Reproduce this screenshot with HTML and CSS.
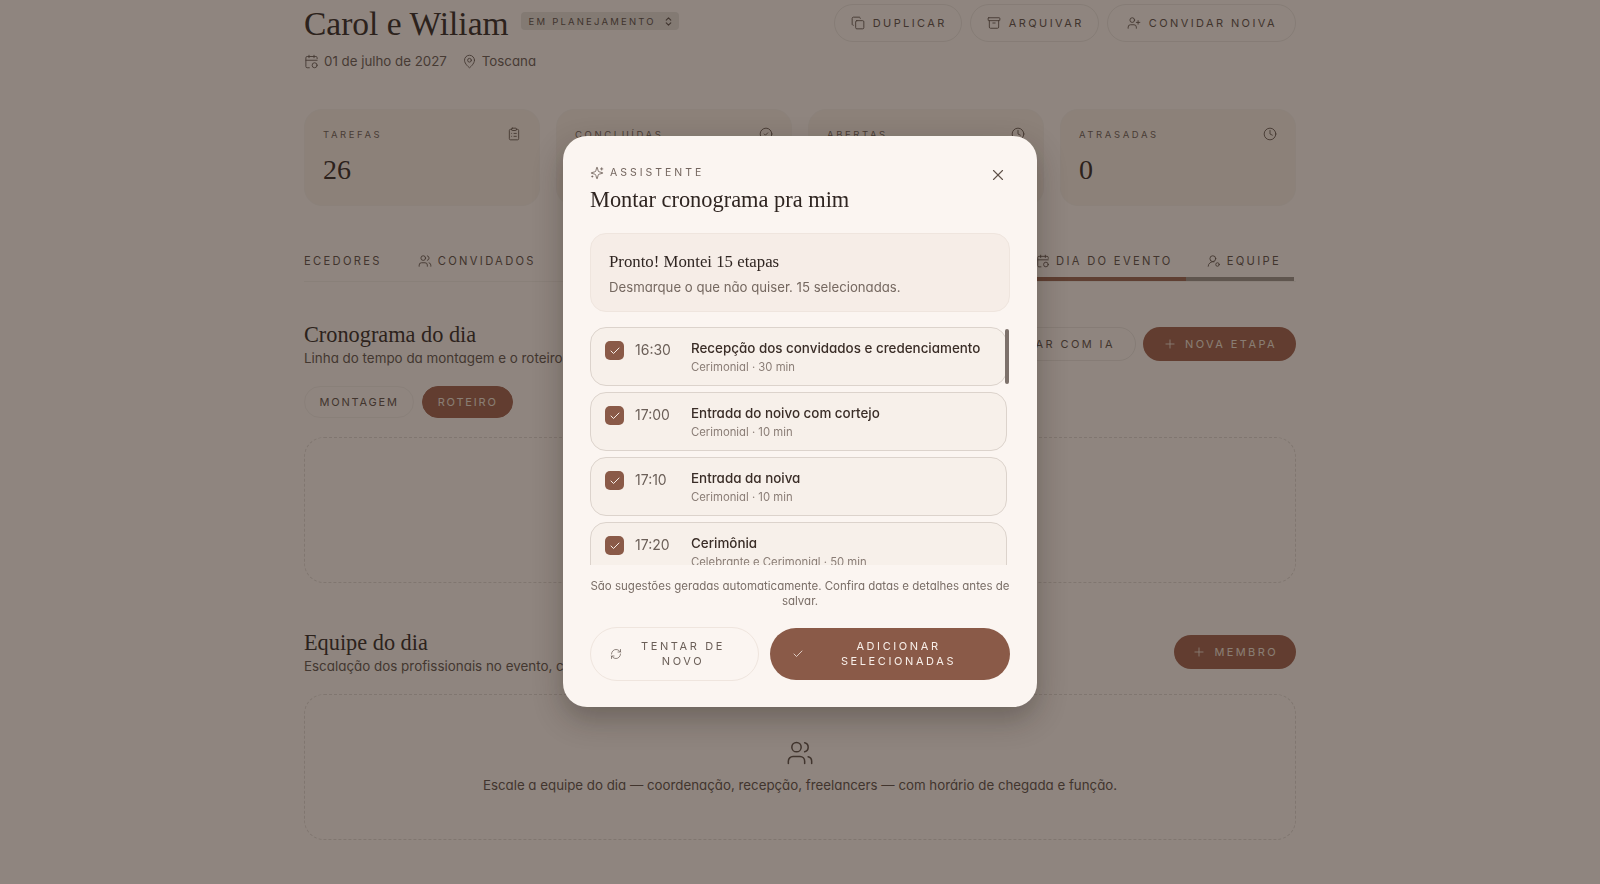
FILE: index.html
```html
<!DOCTYPE html>
<html lang="pt-BR">
<head>
    <meta charset="UTF-8">
    <meta name="viewport" content="width=device-width, initial-scale=1.0">
    <title>Carol e Wiliam</title>
    <link rel="stylesheet" href="styles.css">
</head>
<body>
    <svg class="sprite" xmlns="http://www.w3.org/2000/svg">
        <symbol id="i-calendar" viewBox="0 0 24 24"><path d="M21 7.5V6a2 2 0 0 0-2-2H5a2 2 0 0 0-2 2v14a2 2 0 0 0 2 2h3.5"/><path d="M16 2v4"/><path d="M8 2v4"/><path d="M3 10h18"/><circle cx="17" cy="18" r="4"/></symbol>
        <symbol id="i-pin" viewBox="0 0 24 24"><path d="M20 10c0 6-8 12-8 12s-8-6-8-12a8 8 0 0 1 16 0Z"/><circle cx="12" cy="10" r="3"/></symbol>
        <symbol id="i-copy" viewBox="0 0 24 24"><rect x="8" y="8" width="14" height="14" rx="2"/><path d="M4 16c-1.1 0-2-.9-2-2V4c0-1.1.9-2 2-2h10c1.1 0 2 .9 2 2"/></symbol>
        <symbol id="i-archive" viewBox="0 0 24 24"><rect x="2" y="3" width="20" height="5" rx="1"/><path d="M4 8v11a2 2 0 0 0 2 2h12a2 2 0 0 0 2-2V8"/><path d="M10 12h4"/></symbol>
        <symbol id="i-user-plus" viewBox="0 0 24 24"><path d="M16 21v-2a4 4 0 0 0-4-4H6a4 4 0 0 0-4 4v2"/><circle cx="9" cy="7" r="4"/><path d="M19 8v6"/><path d="M22 11h-6"/></symbol>
        <symbol id="i-clipboard" viewBox="0 0 24 24"><rect x="8" y="2" width="8" height="4" rx="1"/><path d="M16 4h2a2 2 0 0 1 2 2v14a2 2 0 0 1-2 2H6a2 2 0 0 1-2-2V6a2 2 0 0 1 2-2h2"/><path d="M12 11h4"/><path d="M12 16h4"/><path d="M8 11h.01"/><path d="M8 16h.01"/></symbol>
        <symbol id="i-circle-check" viewBox="0 0 24 24"><circle cx="12" cy="12" r="10"/><path d="m9 12 2 2 4-4"/></symbol>
        <symbol id="i-clock" viewBox="0 0 24 24"><circle cx="12" cy="12" r="10"/><path d="M12 6v6l4 2"/></symbol>
        <symbol id="i-users" viewBox="0 0 24 24"><path d="M16 21v-2a4 4 0 0 0-4-4H6a4 4 0 0 0-4 4v2"/><circle cx="9" cy="7" r="4"/><path d="M22 21v-2a4 4 0 0 0-3-3.87"/><path d="M16 3.13a4 4 0 0 1 0 7.75"/></symbol>
        <symbol id="i-user-cog" viewBox="0 0 24 24"><circle cx="10" cy="8" r="5"/><path d="M2 21a8 8 0 0 1 10-7.7"/><circle cx="18" cy="18" r="3"/></symbol>
        <symbol id="i-plus" viewBox="0 0 24 24"><path d="M5 12h14"/><path d="M12 5v14"/></symbol>
        <symbol id="i-check" viewBox="0 0 24 24"><path d="M20 6 9 17l-5-5"/></symbol>
        <symbol id="i-refresh" viewBox="0 0 24 24"><path d="M3 12a9 9 0 0 1 9-9 9.75 9.75 0 0 1 6.74 2.74L21 8"/><path d="M21 3v5h-5"/><path d="M21 12a9 9 0 0 1-9 9 9.75 9.75 0 0 1-6.74-2.74L3 16"/><path d="M8 16H3v5"/></symbol>
        <symbol id="i-x" viewBox="0 0 24 24"><path d="M18 6 6 18"/><path d="m6 6 12 12"/></symbol>
        <symbol id="i-sparkles" viewBox="0 0 24 24"><path d="M9.937 15.5A2 2 0 0 0 8.5 14.063l-6.135-1.582a.5.5 0 0 1 0-.962L8.5 9.936A2 2 0 0 0 9.937 8.5l1.582-6.135a.5.5 0 0 1 .963 0L14.063 8.5A2 2 0 0 0 15.5 9.937l6.135 1.581a.5.5 0 0 1 0 .964L15.5 14.063a2 2 0 0 0-1.437 1.437l-1.582 6.135a.5.5 0 0 1-.963 0z"/><path d="M20 3v4"/><path d="M22 5h-4"/><path d="M4 17v2"/><path d="M5 18H3"/></symbol>
        <symbol id="i-updown" viewBox="0 0 24 24"><path d="m7 15 5 5 5-5"/><path d="m7 9 5-5 5 5"/></symbol>
    </svg>

    <div class="page">
        <header class="head">
            <div>
                <div class="head-title">
                    <h1 class="couple">Carol e Wiliam</h1>
                    <span class="status">EM PLANEJAMENTO <svg class="icon icon-xs"><use href="#i-updown"/></svg></span>
                </div>
                <div class="meta">
                    <span class="meta-item"><svg class="icon"><use href="#i-calendar"/></svg>01 de julho de 2027</span>
                    <span class="meta-item"><svg class="icon"><use href="#i-pin"/></svg>Toscana</span>
                </div>
            </div>
            <div class="head-actions">
                <span class="btn btn-head"><svg class="icon"><use href="#i-copy"/></svg>DUPLICAR</span>
                <span class="btn btn-head"><svg class="icon"><use href="#i-archive"/></svg>ARQUIVAR</span>
                <span class="btn btn-head btn-invite"><svg class="icon"><use href="#i-user-plus"/></svg>CONVIDAR NOIVA</span>
            </div>
        </header>

        <section class="stats">
            <div class="stat">
                <div class="stat-top"><span class="stat-label">TAREFAS</span><svg class="icon"><use href="#i-clipboard"/></svg></div>
                <div class="stat-value">26</div>
            </div>
            <div class="stat">
                <div class="stat-top"><span class="stat-label">CONCLUÍDAS</span><svg class="icon"><use href="#i-circle-check"/></svg></div>
                <div class="stat-value">0</div>
            </div>
            <div class="stat">
                <div class="stat-top"><span class="stat-label">ABERTAS</span><svg class="icon"><use href="#i-clock"/></svg></div>
                <div class="stat-value">26</div>
            </div>
            <div class="stat">
                <div class="stat-top"><span class="stat-label">ATRASADAS</span><svg class="icon"><use href="#i-clock"/></svg></div>
                <div class="stat-value">0</div>
            </div>
        </section>

        <nav class="tabs">
            <div class="tabs-group tabs-left">
                <span class="tab tab-cut">FORNECEDORES</span>
                <span class="tab"><svg class="icon"><use href="#i-users"/></svg>CONVIDADOS</span>
            </div>
            <div class="tabs-group tabs-right">
                <span class="tab tab-active"><svg class="icon"><use href="#i-calendar"/></svg>DIA DO EVENTO</span>
                <span class="tab tab-last"><svg class="icon"><use href="#i-user-cog"/></svg>EQUIPE</span>
            </div>
            <div class="tabs-thumb"></div>
        </nav>

        <section class="block">
            <div class="block-head">
                <div>
                    <h2 class="block-title">Cronograma do dia</h2>
                    <p class="block-sub">Linha do tempo da montagem e o roteiro da festa</p>
                </div>
                <div class="block-actions">
                    <span class="btn btn-outline">GERAR COM IA</span>
                    <span class="btn btn-dark"><svg class="icon"><use href="#i-plus"/></svg>NOVA ETAPA</span>
                </div>
            </div>
            <div class="pills">
                <span class="pill">MONTAGEM</span>
                <span class="pill pill-on">ROTEIRO</span>
            </div>
            <div class="empty empty-plain"></div>
        </section>

        <section class="block block-team">
            <div class="block-head">
                <div>
                    <h2 class="block-title">Equipe do dia</h2>
                    <p class="block-sub">Escalação dos profissionais no evento, com horário e função</p>
                </div>
                <span class="btn btn-dark btn-member"><svg class="icon"><use href="#i-plus"/></svg>MEMBRO</span>
            </div>
            <div class="empty">
                <svg class="icon icon-lg"><use href="#i-users"/></svg>
                <p>Escale a equipe do dia — coordenação, recepção, freelancers — com horário de chegada e função.</p>
            </div>
        </section>
    </div>

    <div class="overlay">
        <div class="modal">
            <div class="modal-head">
                <div>
                    <div class="eyebrow"><svg class="icon"><use href="#i-sparkles"/></svg>ASSISTENTE</div>
                    <h2 class="modal-title">Montar cronograma pra mim</h2>
                </div>
                <svg class="icon close"><use href="#i-x"/></svg>
            </div>

            <div class="summary">
                <div class="summary-title">Pronto! Montei 15 etapas</div>
                <div class="summary-sub">Desmarque o que não quiser. 15 selecionadas.</div>
            </div>

            <div class="steps">
                <div class="step">
                    <span class="check"><svg class="icon"><use href="#i-check"/></svg></span>
                    <span class="step-time">16:30</span>
                    <div>
                        <div class="step-name">Recepção dos convidados e credenciamento</div>
                        <div class="step-info">Cerimonial · 30 min</div>
                    </div>
                </div>
                <div class="step">
                    <span class="check"><svg class="icon"><use href="#i-check"/></svg></span>
                    <span class="step-time">17:00</span>
                    <div>
                        <div class="step-name">Entrada do noivo com cortejo</div>
                        <div class="step-info">Cerimonial · 10 min</div>
                    </div>
                </div>
                <div class="step">
                    <span class="check"><svg class="icon"><use href="#i-check"/></svg></span>
                    <span class="step-time">17:10</span>
                    <div>
                        <div class="step-name">Entrada da noiva</div>
                        <div class="step-info">Cerimonial · 10 min</div>
                    </div>
                </div>
                <div class="step">
                    <span class="check"><svg class="icon"><use href="#i-check"/></svg></span>
                    <span class="step-time">17:20</span>
                    <div>
                        <div class="step-name">Cerimônia</div>
                        <div class="step-info">Celebrante e Cerimonial · 50 min</div>
                    </div>
                </div>
                <div class="steps-thumb"></div>
            </div>

            <p class="note">São sugestões geradas automaticamente. Confira datas e detalhes antes de salvar.</p>

            <div class="modal-actions">
                <span class="btn-big btn-retry"><svg class="icon"><use href="#i-refresh"/></svg><span class="btn-big-text">TENTAR DE<br>NOVO</span></span>
                <span class="btn-big btn-add"><svg class="icon"><use href="#i-check"/></svg><span class="btn-big-text">ADICIONAR<br>SELECIONADAS</span></span>
            </div>
        </div>
    </div>
</body>
</html>
```

FILE: styles.css
```css
* {
    box-sizing: border-box;
}

body {
    margin: 0;
    height: 884px;
    overflow: hidden;
    background-color: #faf1eb;
    color: #46362e;
    font-family: Inter, "Noto Sans", sans-serif;
    font-feature-settings: "cv11";
}

h1, h2, p {
    margin: 0;
    font-weight: 400;
}

.sprite {
    display: none;
}

.icon {
    width: 14px;
    height: 14px;
    flex: none;
    fill: none;
    stroke: currentColor;
    stroke-width: 1.5;
    stroke-linecap: round;
    stroke-linejoin: round;
}

.icon-xs {
    width: 11px;
    height: 11px;
    stroke-width: 2.4;
}

.icon-lg {
    width: 28px;
    height: 28px;
    stroke-width: 1.3;
}

.page {
    width: 992px;
    margin: 0 auto;
}

/* header */
.head {
    display: flex;
    justify-content: space-between;
    align-items: flex-start;
    padding-top: 2px;
}

.head-title {
    display: flex;
    align-items: center;
    gap: 12px;
    height: 44px;
}

.couple {
    font-family: "Liberation Serif", serif;
    font-size: 33.5px;
    line-height: 44px;
    color: #352a26;
}

.status {
    display: flex;
    align-items: center;
    gap: 7px;
    height: 18px;
    margin-top: -6px;
    padding: 0 5px 0 8px;
    border-radius: 4px;
    background: #e2dad3;
    font-size: 9.5px;
    letter-spacing: 2.2px;
    color: #5c4f48;
}

.meta {
    display: flex;
    gap: 15px;
    margin-top: 7px;
    font-size: 13.3px;
    color: #6a5c55;
}

.meta-item {
    display: flex;
    align-items: center;
    gap: 5px;
}

.meta-item .icon {
    width: 15px;
    height: 15px;
}

.head-actions {
    display: flex;
    gap: 8px;
    margin-top: 2px;
}

.btn {
    display: inline-flex;
    align-items: center;
    gap: 8px;
    border-radius: 999px;
    font-size: 11px;
    letter-spacing: 2.4px;
    white-space: nowrap;
}

.btn-head {
    height: 38px;
    padding: 0 14px 0 16px;
    border: 1px solid #e8dfd8;
    color: #5f5048;
}

.btn-invite {
    padding: 0 18px 0 19px;
}

/* stats */
.stats {
    display: grid;
    grid-template-columns: repeat(4, 1fr);
    gap: 16px;
    margin-top: 40px;
}

.stat {
    height: 97px;
    padding: 17px 18px;
    border: 1px solid #f2e9e1;
    border-radius: 18px;
    background: #f5e9df;
}

.stat-top {
    display: flex;
    justify-content: space-between;
    align-items: center;
    color: #5f5048;
}

.stat-label {
    font-size: 9.5px;
    letter-spacing: 2.6px;
    color: #6e6058;
}

.stat-value {
    margin-top: 12px;
    font-family: "Liberation Serif", serif;
    font-size: 28px;
    line-height: 34px;
    color: #352a26;
}

/* tabs */
.tabs {
    position: relative;
    display: flex;
    justify-content: space-between;
    height: 36px;
    margin-top: 40px;
    overflow: hidden;
    border-bottom: 1px solid #efe6df;
}

.tabs-group {
    display: flex;
    align-items: flex-start;
}

.tabs-left {
    gap: 36px;
    margin-left: -40px;
}

.tabs-right {
    gap: 18px;
}

.tab {
    display: flex;
    align-items: center;
    gap: 6px;
    height: 30px;
    font-size: 11.2px;
    letter-spacing: 2.3px;
    color: #5f5048;
}

.tab-active {
    height: 35px;
    padding: 0 16px 1px 0;
    border-bottom: 4px solid #9a6450;
}

.tab-last {
    padding-right: 15px;
}

.tabs-thumb {
    position: absolute;
    right: 2px;
    bottom: 0;
    width: 108px;
    height: 4px;
    background: #9a9088;
}

/* blocks */
.block {
    margin-top: 39px;
}

.block-team {
    margin-top: 46px;
}

.block-head {
    display: flex;
    justify-content: space-between;
    align-items: center;
}

.block-title {
    font-family: "Liberation Serif", serif;
    font-size: 22.3px;
    line-height: 28px;
    color: #352a26;
}

.block-sub {
    font-size: 13.4px;
    line-height: 18px;
    color: #63554d;
}

.block-actions {
    display: flex;
    gap: 7px;
}

.btn-outline {
    height: 34px;
    padding: 0 20px;
    border: 1px solid #e8dfd8;
    color: #5f5048;
}

.btn-dark {
    height: 34px;
    padding: 0 19px 0 20px;
    background: #a0604c;
    color: #efe0d5;
}

.btn-member {
    padding: 0 18px;
}

.pills {
    display: flex;
    gap: 8px;
    margin-top: 19px;
}

.pill {
    display: flex;
    align-items: center;
    height: 32px;
    padding: 0 14.5px;
    border: 1px solid #efe6df;
    border-radius: 999px;
    font-size: 11px;
    letter-spacing: 1.8px;
    color: #5f5048;
}

.pill-on {
    border-color: #a0604c;
    background: #a0604c;
    color: #efe0d5;
}

.empty {
    display: flex;
    flex-direction: column;
    justify-content: center;
    align-items: center;
    gap: 10px;
    height: 146px;
    margin-top: 19px;
    padding-bottom: 2px;
    border: 1px dashed #ddd3cc;
    border-radius: 20px;
    color: #5f5048;
    font-size: 13.3px;
}

/* overlay + modal */
.overlay {
    position: fixed;
    top: 0;
    left: 0;
    width: 100%;
    height: 100%;
    background: rgba(36, 26, 20, 0.5);
    backdrop-filter: blur(0.5px);
}

.modal {
    position: absolute;
    top: 136px;
    left: 563px;
    width: 474px;
    height: 571px;
    padding: 27px;
    border-radius: 24px;
    background: #fbf5f1;
    box-shadow: 0 12px 30px rgba(30, 20, 14, 0.3);
}

.modal-head {
    display: flex;
    justify-content: space-between;
    align-items: flex-start;
}

.eyebrow {
    display: flex;
    align-items: center;
    gap: 6px;
    font-size: 10.5px;
    line-height: 20px;
    letter-spacing: 3px;
    color: #74665f;
}

.modal-title {
    margin-top: 2px;
    font-family: "Liberation Serif", serif;
    font-size: 22.4px;
    line-height: 30px;
    color: #2f2521;
}

.close {
    width: 18px;
    height: 18px;
    margin: 3px 3px 0 0;
    color: #5f5048;
}

.summary {
    height: 79px;
    margin-top: 18px;
    padding: 16px 18px;
    border: 1px solid #efe5de;
    border-radius: 16px;
    background: #f6ede7;
}

.summary-title {
    font-family: "Liberation Serif", serif;
    font-size: 16.8px;
    line-height: 24px;
    color: #2f2521;
}

.summary-sub {
    margin-top: 4px;
    font-size: 13.2px;
    line-height: 18px;
    color: #756860;
}

.steps {
    position: relative;
    display: flex;
    flex-direction: column;
    gap: 6px;
    height: 238px;
    margin-top: 15px;
    overflow: hidden;
}

.step {
    display: flex;
    flex: none;
    align-items: flex-start;
    width: 417px;
    height: 59px;
    padding: 10px 14px;
    border: 1px solid #dcd3cc;
    border-radius: 16px;
    background: #f7f0ea;
}

.check {
    display: flex;
    justify-content: center;
    align-items: center;
    width: 19px;
    height: 19px;
    margin-top: 3px;
    border-radius: 5px;
    background: #8a5a48;
    color: #f8efe9;
}

.check .icon {
    width: 12px;
    height: 12px;
    stroke-width: 2;
}

.step-time {
    width: 67px;
    padding-left: 11px;
    font-size: 14px;
    line-height: 24px;
    color: #6b5f58;
}

.step-name {
    font-size: 13.4px;
    font-weight: 500;
    line-height: 21px;
    color: #3a2d27;
    white-space: nowrap;
}

.step-info {
    font-size: 11.3px;
    line-height: 16px;
    color: #8a7d76;
    white-space: nowrap;
}

.steps-thumb {
    position: absolute;
    top: 2px;
    right: 1px;
    width: 4px;
    height: 55px;
    border-radius: 2px;
    background: #7d716b;
}

.note {
    margin-top: 14px;
    font-size: 11.5px;
    line-height: 15px;
    text-align: center;
    color: #7a6e67;
}

.modal-actions {
    display: flex;
    align-items: center;
    gap: 11px;
    margin-top: 18px;
}

.btn-big {
    display: flex;
    align-items: center;
    border-radius: 999px;
    font-size: 11px;
    line-height: 15px;
    letter-spacing: 2.6px;
    text-align: center;
}

.btn-big .icon {
    width: 12px;
    height: 12px;
}

.btn-big-text {
    flex: 1;
}

.btn-retry {
    width: 169px;
    height: 54px;
    padding: 0 14px 0 19px;
    border: 1px solid #efe5de;
    color: #6b5f58;
}

.btn-add {
    width: 240px;
    height: 52px;
    padding: 0 17px 0 22px;
    background: #8a5a48;
    color: #f8efe9;
}
```
